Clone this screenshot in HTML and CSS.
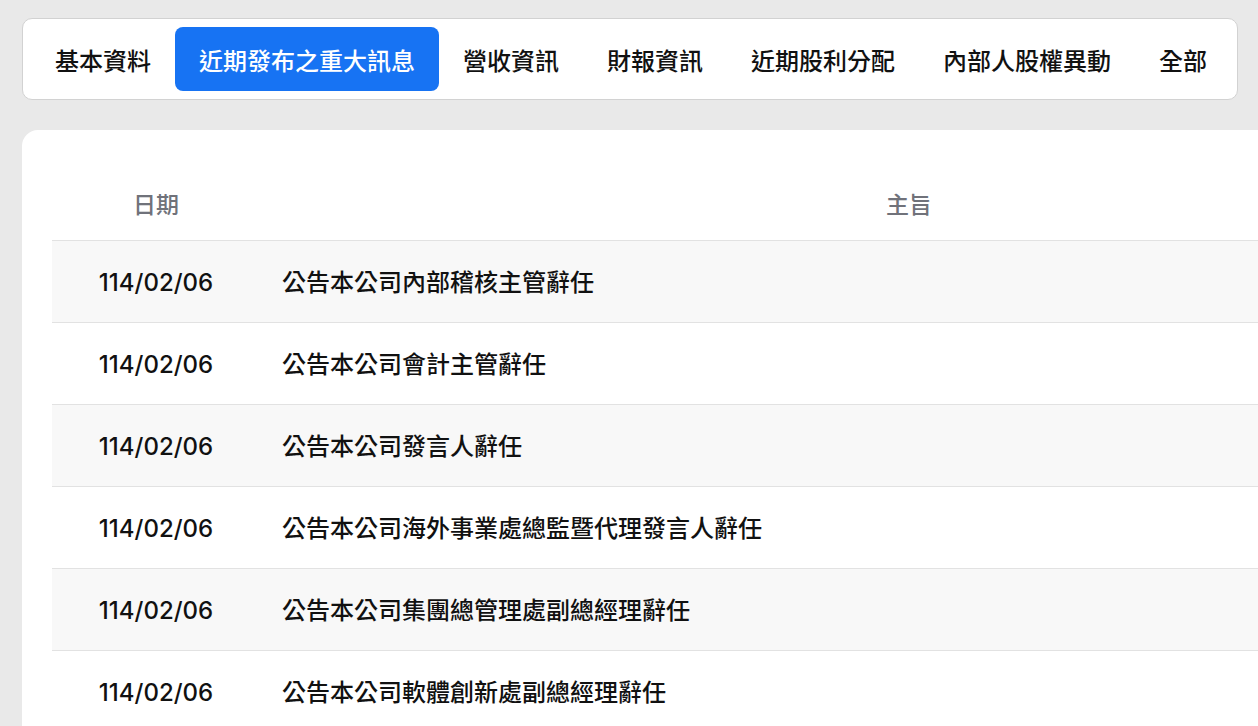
FILE: index.html
```html
<!DOCTYPE html>
<html lang="zh-Hant">
<head>
    <meta charset="UTF-8">
    <meta name="viewport" content="width=device-width, initial-scale=1.0">
    <title>重大訊息</title>
    <link rel="stylesheet" href="styles.css">
</head>
<body>
    <div class="page">
        <!-- 分頁 -->
        <nav class="tabs">
            <div class="tab">基本資料</div>
            <div class="tab active">近期發布之重大訊息</div>
            <div class="tab">營收資訊</div>
            <div class="tab">財報資訊</div>
            <div class="tab">近期股利分配</div>
            <div class="tab">內部人股權異動</div>
            <div class="tab">全部</div>
        </nav>

        <!-- 重大訊息列表 -->
        <div class="card">
            <table class="news-table">
                <thead>
                    <tr>
                        <th class="col-date">日期</th>
                        <th class="col-subject">主旨</th>
                    </tr>
                </thead>
                <tbody>
                    <tr>
                        <td class="date">114/02/06</td>
                        <td class="subject">公告本公司內部稽核主管辭任</td>
                    </tr>
                    <tr>
                        <td class="date">114/02/06</td>
                        <td class="subject">公告本公司會計主管辭任</td>
                    </tr>
                    <tr>
                        <td class="date">114/02/06</td>
                        <td class="subject">公告本公司發言人辭任</td>
                    </tr>
                    <tr>
                        <td class="date">114/02/06</td>
                        <td class="subject">公告本公司海外事業處總監暨代理發言人辭任</td>
                    </tr>
                    <tr>
                        <td class="date">114/02/06</td>
                        <td class="subject">公告本公司集團總管理處副總經理辭任</td>
                    </tr>
                    <tr>
                        <td class="date">114/02/06</td>
                        <td class="subject">公告本公司軟體創新處副總經理辭任</td>
                    </tr>
                </tbody>
            </table>
        </div>
    </div>
</body>
</html>
```

FILE: styles.css
```css
html, body {
    overflow: hidden;
}

body {
    margin: 0;
    padding: 0;
    background-color: #e9e9e9;
    font-family: Inter, "Noto Sans CJK TC", sans-serif;
    color: #111;
}

.page {
    padding: 18px 20px 0 22px;
}

.tabs {
    display: flex;
    background-color: white;
    border: 1px solid #d2d2d2;
    border-radius: 10px;
    padding: 8px;
}

.tab {
    height: 64px;
    padding: 0 24px;
    display: flex;
    align-items: center;
    font-size: 24px;
    font-weight: 500;
    color: #111;
    border-radius: 8px;
    cursor: pointer;
    white-space: nowrap;
}

.tab.active {
    background-color: #1773f3;
    color: white;
}

.card {
    margin-top: 30px;
    width: 1566px;
    background-color: white;
    border-radius: 16px;
    padding: 35px 30px 30px;
    box-sizing: border-box;
}

.news-table {
    width: 100%;
    border-collapse: collapse;
}

.news-table th {
    height: 75px;
    padding: 0;
    font-size: 23px;
    font-weight: 500;
    color: #70727a;
    text-align: center;
    border-bottom: 1px solid #e2e2e2;
}

.col-date {
    width: 208px;
}

.news-table td {
    height: 77px;
    padding: 4px 0 0;
    line-height: 1.2;
    border-bottom: 1px solid #e2e2e2;
}

.news-table tbody tr:nth-child(odd) {
    background-color: #f8f8f8;
}

.date {
    text-align: center;
    font-size: 24px;
    font-weight: 500;
}

.subject {
    padding-left: 22px !important;
    font-size: 24px;
    font-weight: 500;
}
```
